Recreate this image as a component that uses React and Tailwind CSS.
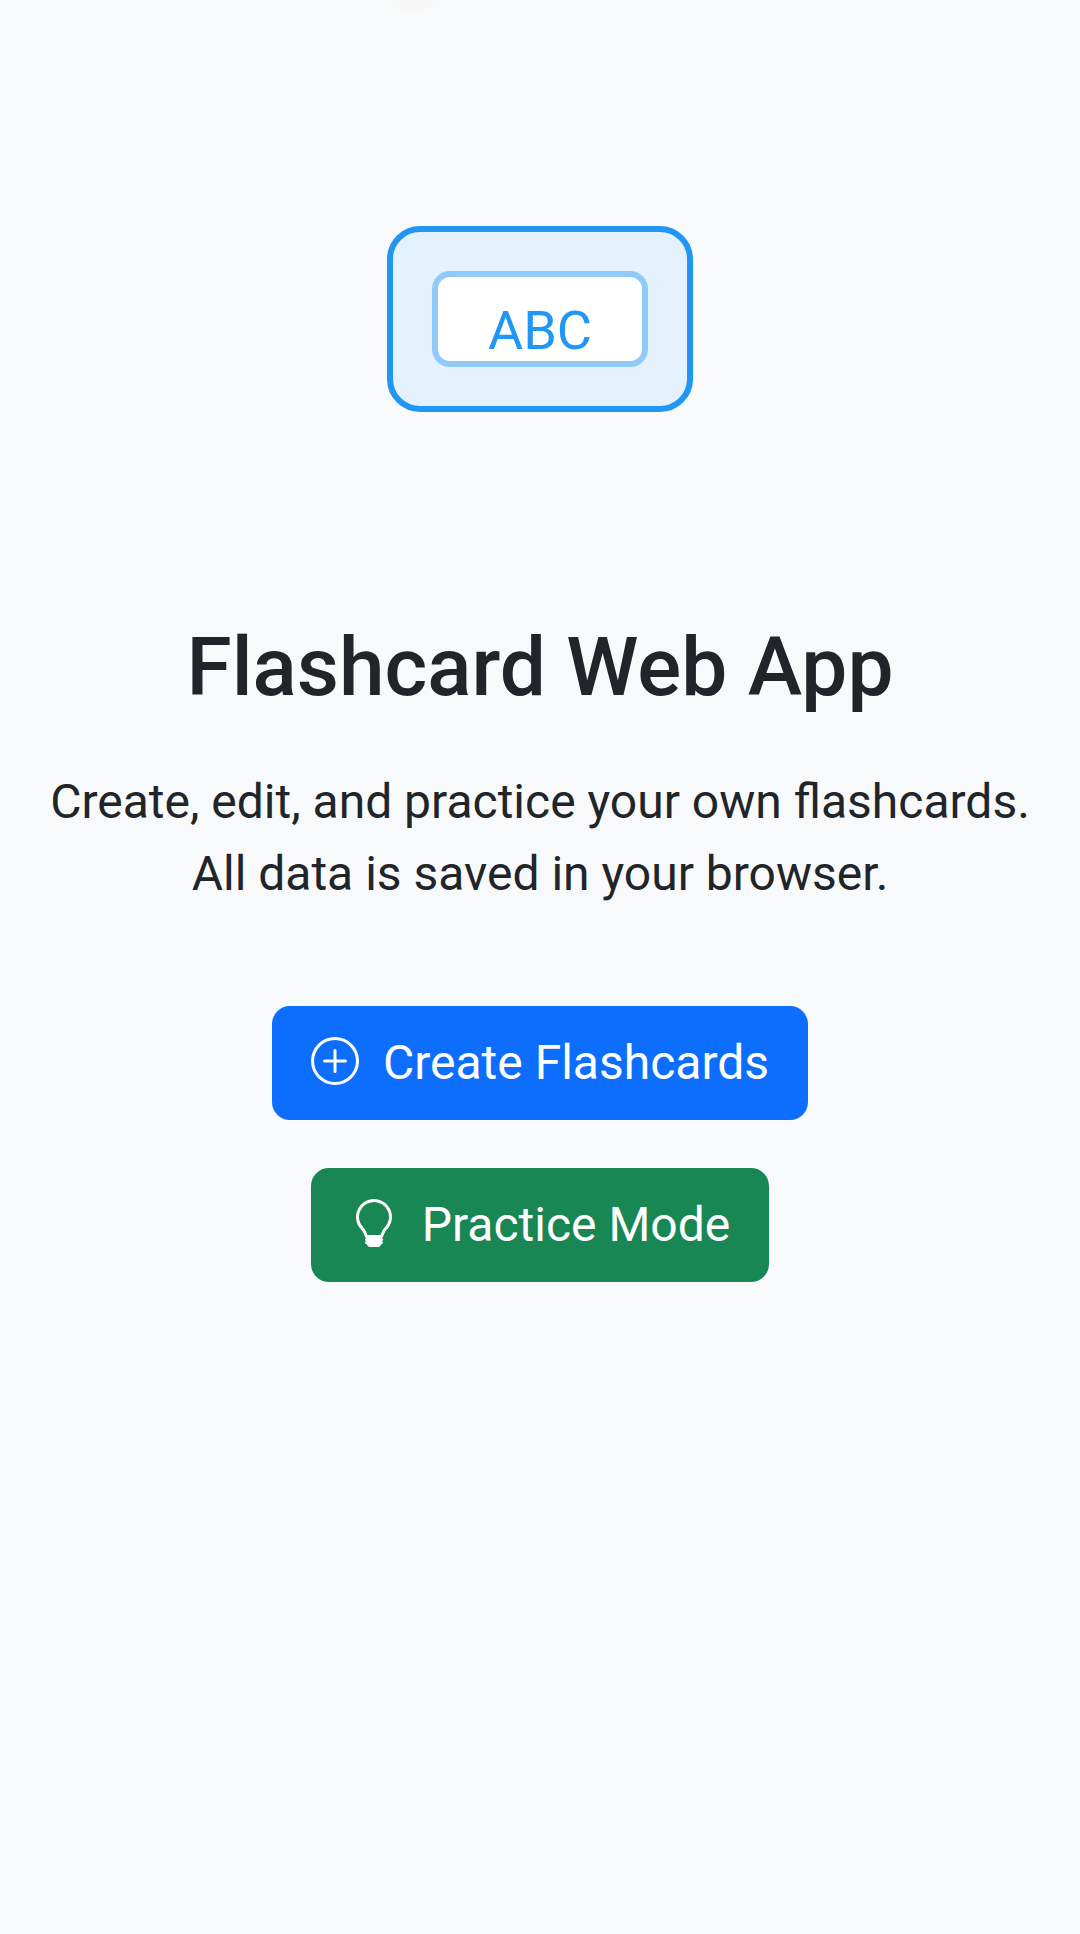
import { BsLightbulb, BsPlusCircle } from "react-icons/bs";

function CardIllustration() {
  return (
    <svg
      className="h-[360px] w-[360px]"
      viewBox="0 0 120 120"
      role="img"
      aria-label="Flashcard"
    >
      <rect x="10" y="30" width="100" height="60" rx="10" fill="#e3f2fd" stroke="#2196f3" strokeWidth="2" />
      <rect x="25" y="45" width="70" height="30" rx="5" fill="#fff" stroke="#90caf9" strokeWidth="2" />
      <text x="60" y="70" textAnchor="middle" fontSize="18" fill="#2196f3">
        ABC
      </text>
    </svg>
  );
}

function ActionLink({ href, color, icon: Icon, children }) {
  return (
    <a
      href={href}
      className={`${color} rounded-[18px] border-[3px] px-9 py-[18px] text-center text-[48px] leading-[72px] text-white`}
    >
      <Icon className="mr-6 inline-block size-12 align-[-0.125em]" aria-hidden="true" />
      {children}
    </a>
  );
}

export default function App() {
  return (
    <div className="relative min-h-screen overflow-hidden bg-[#f8f9fa] font-[Roboto,sans-serif] text-[#212529]">
      <div className="absolute -top-[46px] left-[384px] size-[58px] rounded-full bg-[#f7f7f6]" />
      <main className="flex flex-col items-center px-9 pt-[139px] text-center">
        <CardIllustration />
        <h1 className="mt-[119px] text-[82px] leading-[98px] font-medium">Flashcard Web App</h1>
        <p className="mt-[50px] text-[48px] leading-[72px]">
          Create, edit, and practice your own flashcards.
          <br />
          All data is saved in your browser.
        </p>
        <nav className="mt-24 flex flex-col items-center gap-12">
          <ActionLink href="#create" color="border-[#0d6efd] bg-[#0d6efd]" icon={BsPlusCircle}>
            Create Flashcards
          </ActionLink>
          <ActionLink href="#practice" color="border-[#198754] bg-[#198754]" icon={BsLightbulb}>
            Practice Mode
          </ActionLink>
        </nav>
      </main>
    </div>
  );
}
